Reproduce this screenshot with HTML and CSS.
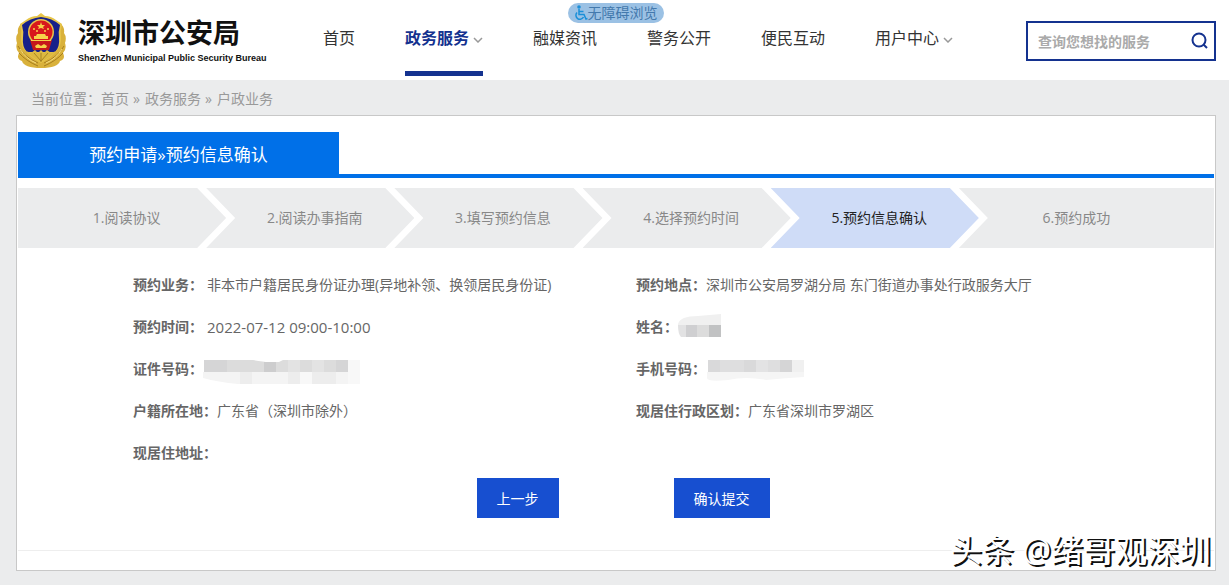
FILE: index.html
```html
<!DOCTYPE html>
<html lang="zh-CN">
<head>
    <meta charset="utf-8">
    <meta name="viewport" content="width=device-width, initial-scale=1">
    <title>深圳市公安局</title>
    <link rel="stylesheet" href="styles.css">
</head>
<body>
    <header class="header">
        <a href="#" class="logo">
            <svg class="emblem" viewBox="0 0 50 56" aria-hidden="true">
                <!-- wreath -->
                <path d="M6 10 Q1 14 2 20 Q-1 24 1 30 Q-1 36 3 40 Q0 46 6 48 Q8 55 25 55 Q42 55 44 48 Q50 46 47 40 Q51 36 49 30 Q51 24 48 20 Q49 14 44 10 Z" fill="#d9b13b"/>
                <path d="M2 33 Q8 44 22 50 M3 40 Q10 48 22 53 M48 33 Q42 44 28 50 M47 40 Q40 48 28 53" fill="none" stroke="#a67d1d" stroke-width="1"/>
                <path d="M4 36 Q10 46 20 50 M46 36 Q40 46 30 50" fill="none" stroke="#f4da7c" stroke-width="1"/>
                <!-- shield -->
                <path d="M25 0 L29 3 Q35 3 40 7 L46 11 Q44 18 45 25 Q46 39 25 50 Q4 39 5 25 Q6 18 4 11 L10 7 Q15 3 21 3 Z" fill="#e7c54a"/>
                <path d="M25 4 Q36 5 44 12 Q42 19 43 25 Q44 34 39 39 H11 Q6 34 7 25 Q8 19 6 12 Q14 5 25 4 Z" fill="#17208a"/>
                <path d="M10 38 L15 40 L19 37 L22 40 L25 37 L28 40 L31 37 L35 40 L40 38 Q35 44 25 49 Q15 44 10 38 Z" fill="#dcb940"/>
                <path d="M25 40 V49 M18 40 L25 48 L32 40" fill="none" stroke="#a98423" stroke-width="1"/>
                <!-- national emblem -->
                <circle cx="25" cy="19" r="13" fill="#e7c54a"/>
                <circle cx="25" cy="19" r="11.5" fill="#d8181c"/>
                <path d="M14 27 L17 37 H33 L36 27 Z" fill="#c6181b"/>
                <path d="M25 9 L26 12 L29 12 L27 14 L28 16 L25 15 L22 16 L23 14 L21 12 L24 12 Z" fill="#f6d34a"/>
                <g fill="#f6d34a">
                    <circle cx="18" cy="16" r="1"/>
                    <circle cx="21" cy="18" r="1"/>
                    <circle cx="29" cy="18" r="1"/>
                    <circle cx="32" cy="16" r="1"/>
                    <path d="M21 21 H29 L30 23 H32 V26 H18 V23 H20 Z"/>
                    <path d="M15 27 H35 V28 H15 Z"/>
                    <path d="M19 33 L22 31 L25 33 L28 31 L31 33 L30 35 H20 Z"/>
                </g>
            </svg>
            <span class="logo-text">
                <strong class="logo-cn">深圳市公安局</strong>
                <span class="logo-en">ShenZhen Municipal Public Security Bureau</span>
            </span>
        </a>

        <nav class="nav">
            <a href="#">首页</a>
            <a href="#" class="active">政务服务<svg class="arrow" viewBox="0 0 10 6" aria-hidden="true"><path d="M1 1 L5 5 L9 1"/></svg></a>
            <a href="#">融媒资讯</a>
            <a href="#">警务公开</a>
            <a href="#">便民互动</a>
            <a href="#">用户中心<svg class="arrow" viewBox="0 0 10 6" aria-hidden="true"><path d="M1 1 L5 5 L9 1"/></svg></a>
        </nav>

        <form class="search">
            <input type="text" placeholder="查询您想找的服务" aria-label="查询您想找的服务">
            <button type="button" aria-label="搜索">
                <svg viewBox="0 0 18 18" aria-hidden="true"><circle cx="8" cy="8" r="6.5"/><path d="M12.5 12.5 L16 16"/></svg>
            </button>
        </form>

        <a href="#" class="barrier-free">
            <svg viewBox="0 0 14 16" aria-hidden="true"><circle cx="5" cy="2" r="1.8" class="head"/><path d="M5 4 V9.5 H10 L12 14 L13.5 13.5 M5 6.5 H9.5 M3 7.5 A4 4 0 1 0 9.5 12"/></svg>
            <span>无障碍浏览</span>
        </a>
    </header>

    <div class="breadcrumb">当前位置：<a href="#">首页</a><span>»</span><a href="#">政务服务</a><span>»</span><a href="#">户政业务</a></div>

    <main class="card">
        <div class="title-bar">
            <h1>预约申请»预约信息确认</h1>
        </div>

        <ol class="steps">
            <li>1.阅读协议</li>
            <li>2.阅读办事指南</li>
            <li>3.填写预约信息</li>
            <li>4.选择预约时间</li>
            <li class="current">5.预约信息确认</li>
            <li>6.预约成功</li>
        </ol>

        <dl class="info">
            <div><dt>预约业务：</dt><dd class="spaced">非本市户籍居民身份证办理(异地补领、换领居民身份证)</dd></div>
            <div><dt>预约地点：</dt><dd>深圳市公安局罗湖分局 东门街道办事处行政服务大厅</dd></div>
            <div><dt>预约时间：</dt><dd class="spaced time">2022-07-12 09:00-10:00</dd></div>
            <div>
                <dt>姓名：</dt>
                <dd>
                    <svg class="mosaic" width="46" height="26" viewBox="0 0 46 26" aria-hidden="true">
                        <path d="M0 10 Q2 2 20 2 L43 0 V12 H0 Z" fill="#f0f0f0"/>
                        <path d="M0 11 H8 V23 H3 Q0 20 0 11 Z" fill="#e2e2e3"/>
                        <path d="M8 11 H19 V23 H8 Z" fill="#cfcfd1"/>
                        <path d="M19 11 H31 V23 H19 Z" fill="#dcdcdc"/>
                        <path d="M31 11 H43 V23 H31 Z" fill="#c1c2c3"/>
                    </svg>
                </dd>
            </div>
            <div>
                <dt>证件号码：</dt>
                <dd>
                    <svg class="mosaic" width="158" height="30" viewBox="0 -6 158 30" aria-hidden="true">
                        <path d="M0 12 H157 V24 H35 Q15 22 0 18 Z" fill="#f4f4f4"/>
                        <path d="M1 0 H50 Q60 2 66 2 H76 L80 0 H145 V12 H1 Z" fill="#dcdcdc"/>
                        <path d="M1 0 H24 V12 H1 Z M133 0 H145 V12 H133 Z" fill="#d5d5d6"/>
                        <path d="M61 2 H73 V12 H61 Z" fill="#cdcdce"/>
                        <path d="M85 0 H97 V12 H85 Z M109 0 H121 V12 H109 Z" fill="#e3e3e3"/>
                        <path d="M37 12 H49 V24 H37 Z M85 12 H97 V24 H85 Z M109 12 H133 V24 H109 Z" fill="#ededed"/>
                        <path d="M97 12 H109 V24 H97 Z M145 0 H157 V24 H145 Z" fill="#f8f8f8"/>
                    </svg>
                </dd>
            </div>
            <div>
                <dt>手机号码：</dt>
                <dd>
                    <svg class="mosaic" width="100" height="30" viewBox="0 -6 100 30" aria-hidden="true">
                        <path d="M1 12 H98 V17 Q80 18 60 20 Q40 16 22 20 Q1 22 1 18 Z" fill="#f5f5f5"/>
                        <path d="M2 0 H86 V12 H2 Z" fill="#dededf"/>
                        <path d="M2 0 H14 V12 H2 Z M38 0 H50 V12 H38 Z" fill="#d9d9da"/>
                        <path d="M50 0 H62 V12 H50 Z" fill="#e3e3e4"/>
                        <path d="M74 0 H86 V12 H74 Z" fill="#d5d5d6"/>
                        <path d="M86 0 H98 V12 H86 Z" fill="#f0f0f0"/>
                    </svg>
                </dd>
            </div>
            <div><dt>户籍所在地：</dt><dd>广东省（深圳市除外）</dd></div>
            <div><dt>现居住行政区划：</dt><dd>广东省深圳市罗湖区</dd></div>
            <div><dt>现居住地址：</dt><dd></dd></div>
        </dl>

        <div class="buttons">
            <button type="button">上一步</button>
            <button type="button">确认提交</button>
        </div>
    </main>

    <div class="watermark">头条 @绪哥观深圳</div>
</body>
</html>
```
FILE: styles.css
```css
* {
    box-sizing: border-box;
}

body {
    margin: 0;
    min-height: 100vh;
    position: relative;
    background-color: #ebeced;
    color: #666;
    font-family: "Open Sans", "Noto Sans CJK SC", sans-serif;
    font-size: 14px;
    line-height: 20px;
}

a {
    color: inherit;
    text-decoration: none;
}

button, input {
    font-family: inherit;
    font-size: 14px;
}

/* header */
.header {
    position: relative;
    display: flex;
    align-items: center;
    height: 80px;
    padding: 2px 13px 0 16px;
    background-color: #fff;
}

.logo {
    display: flex;
    gap: 12px;
    width: 282px;
    color: #111;
}

.emblem {
    width: 50px;
    height: 56px;
    flex-shrink: 0;
}

.logo-text {
    display: flex;
    flex-direction: column;
}

.logo-cn {
    font-size: 27px;
    line-height: 40px;
    font-weight: bold;
}

.logo-en {
    font-family: "Liberation Sans", Arial, sans-serif;
    font-size: 9px;
    line-height: 10px;
    font-weight: bold;
    white-space: nowrap;
}

.nav {
    display: flex;
    align-self: flex-start;
    gap: 50px;
    padding-left: 25px;
    color: #333;
    font-size: 16px;
}

.nav a {
    display: flex;
    align-items: center;
    height: 74px;
    padding-bottom: 2px;
    white-space: nowrap;
}

.nav .active {
    position: relative;
    color: #14328f;
    font-weight: bold;
}

.nav .active::after {
    content: "";
    position: absolute;
    left: 0;
    right: 0;
    bottom: 0;
    height: 5px;
    background-color: #14328f;
}

.arrow {
    width: 10px;
    height: 6px;
    margin: 4px 0 0 4px;
    fill: none;
    stroke: #999;
    stroke-width: 1.5;
}

.search {
    display: flex;
    width: 190px;
    height: 40px;
    margin-left: auto;
    border: 2px solid #14328f;
}

.search input {
    flex: 1;
    min-width: 0;
    padding: 0 0 0 10px;
    border: none;
    outline: none;
    font-weight: bold;
}

.search input::placeholder {
    color: #aaa;
}

.search button {
    width: 32px;
    padding: 3px 0 0 4px;
    border: none;
    background: none;
    cursor: pointer;
}

.search svg {
    width: 18px;
    height: 18px;
    fill: none;
    stroke: #14328f;
    stroke-width: 2;
}

.barrier-free {
    position: absolute;
    top: 3px;
    left: 50%;
    display: flex;
    align-items: center;
    height: 20px;
    margin-left: -47px;
    padding: 0 6px;
    border-radius: 10px;
    background-color: #9bc1e4;
    color: #4379ad;
}

.barrier-free svg {
    width: 14px;
    height: 16px;
    fill: none;
    stroke: #1a8fd8;
    stroke-width: 1.5;
}

.barrier-free .head {
    fill: #1a8fd8;
    stroke: none;
}

.breadcrumb {
    padding: 9px 31px 6px;
    color: #999;
}

.breadcrumb span {
    margin: 0 5px 0 4px;
}

/* content */
.card {
    margin: 0 13px 0 16px;
    padding: 16px 1px 19px;
    border: 1px solid #c8c8c8;
    background-color: #fff;
}

.title-bar {
    display: flex;
    border-bottom: 4px solid #0070e8;
}

.title-bar h1 {
    width: 321px;
    margin: 0 0 -2px;
    padding-top: 2px;
    background-color: #0070e8;
    color: #fff;
    font-size: 17px;
    font-weight: normal;
    line-height: 42px;
    text-align: center;
}

.steps {
    display: flex;
    margin: 10px 0 16px;
    padding: 0;
    list-style: none;
}

.steps li {
    flex: 1 1 208px;
    height: 60px;
    margin-left: -20px;
    padding-left: 9px;
    background-color: #ebeced;
    color: #888;
    line-height: 60px;
    text-align: center;
    clip-path: polygon(0 0, calc(100% - 29px) 0, 100% 50%, calc(100% - 29px) 100%, 0 100%, 29px 50%);
}

.steps li:first-child {
    margin-left: 0;
    clip-path: polygon(0 0, calc(100% - 29px) 0, 100% 50%, calc(100% - 29px) 100%, 0 100%);
}

.steps li:last-child {
    flex-basis: 255px;
    padding: 0 20px 0 0;
    clip-path: polygon(0 0, 100% 0, 100% 100%, 0 100%, 29px 50%);
}

.steps .current {
    background-color: #cfdcf7;
    color: #222;
}

.info {
    display: grid;
    grid-template-columns: 1fr 1fr;
    margin: 0;
    padding: 0 75px 0 115px;
}

.info div {
    display: flex;
    align-items: center;
    height: 42px;
}

.info dt {
    font-weight: bold;
}

.info dd {
    margin: 0;
}

.info .spaced {
    padding-left: 4px;
}

.info .time {
    font-size: 15px;
}

.mosaic {
    display: block;
}

.buttons {
    display: flex;
    justify-content: center;
    gap: 115px;
    padding: 4px 0 32px 14px;
    border-bottom: 1px solid #eee;
}

.buttons button {
    height: 40px;
    padding: 0 20px;
    border: none;
    background-color: #174fd0;
    color: #fff;
    cursor: pointer;
}

.watermark {
    position: absolute;
    right: 18px;
    bottom: 12px;
    color: #fff;
    font-size: 32px;
    line-height: 46px;
    text-shadow: 2px 2px 0 #111;
}
```
